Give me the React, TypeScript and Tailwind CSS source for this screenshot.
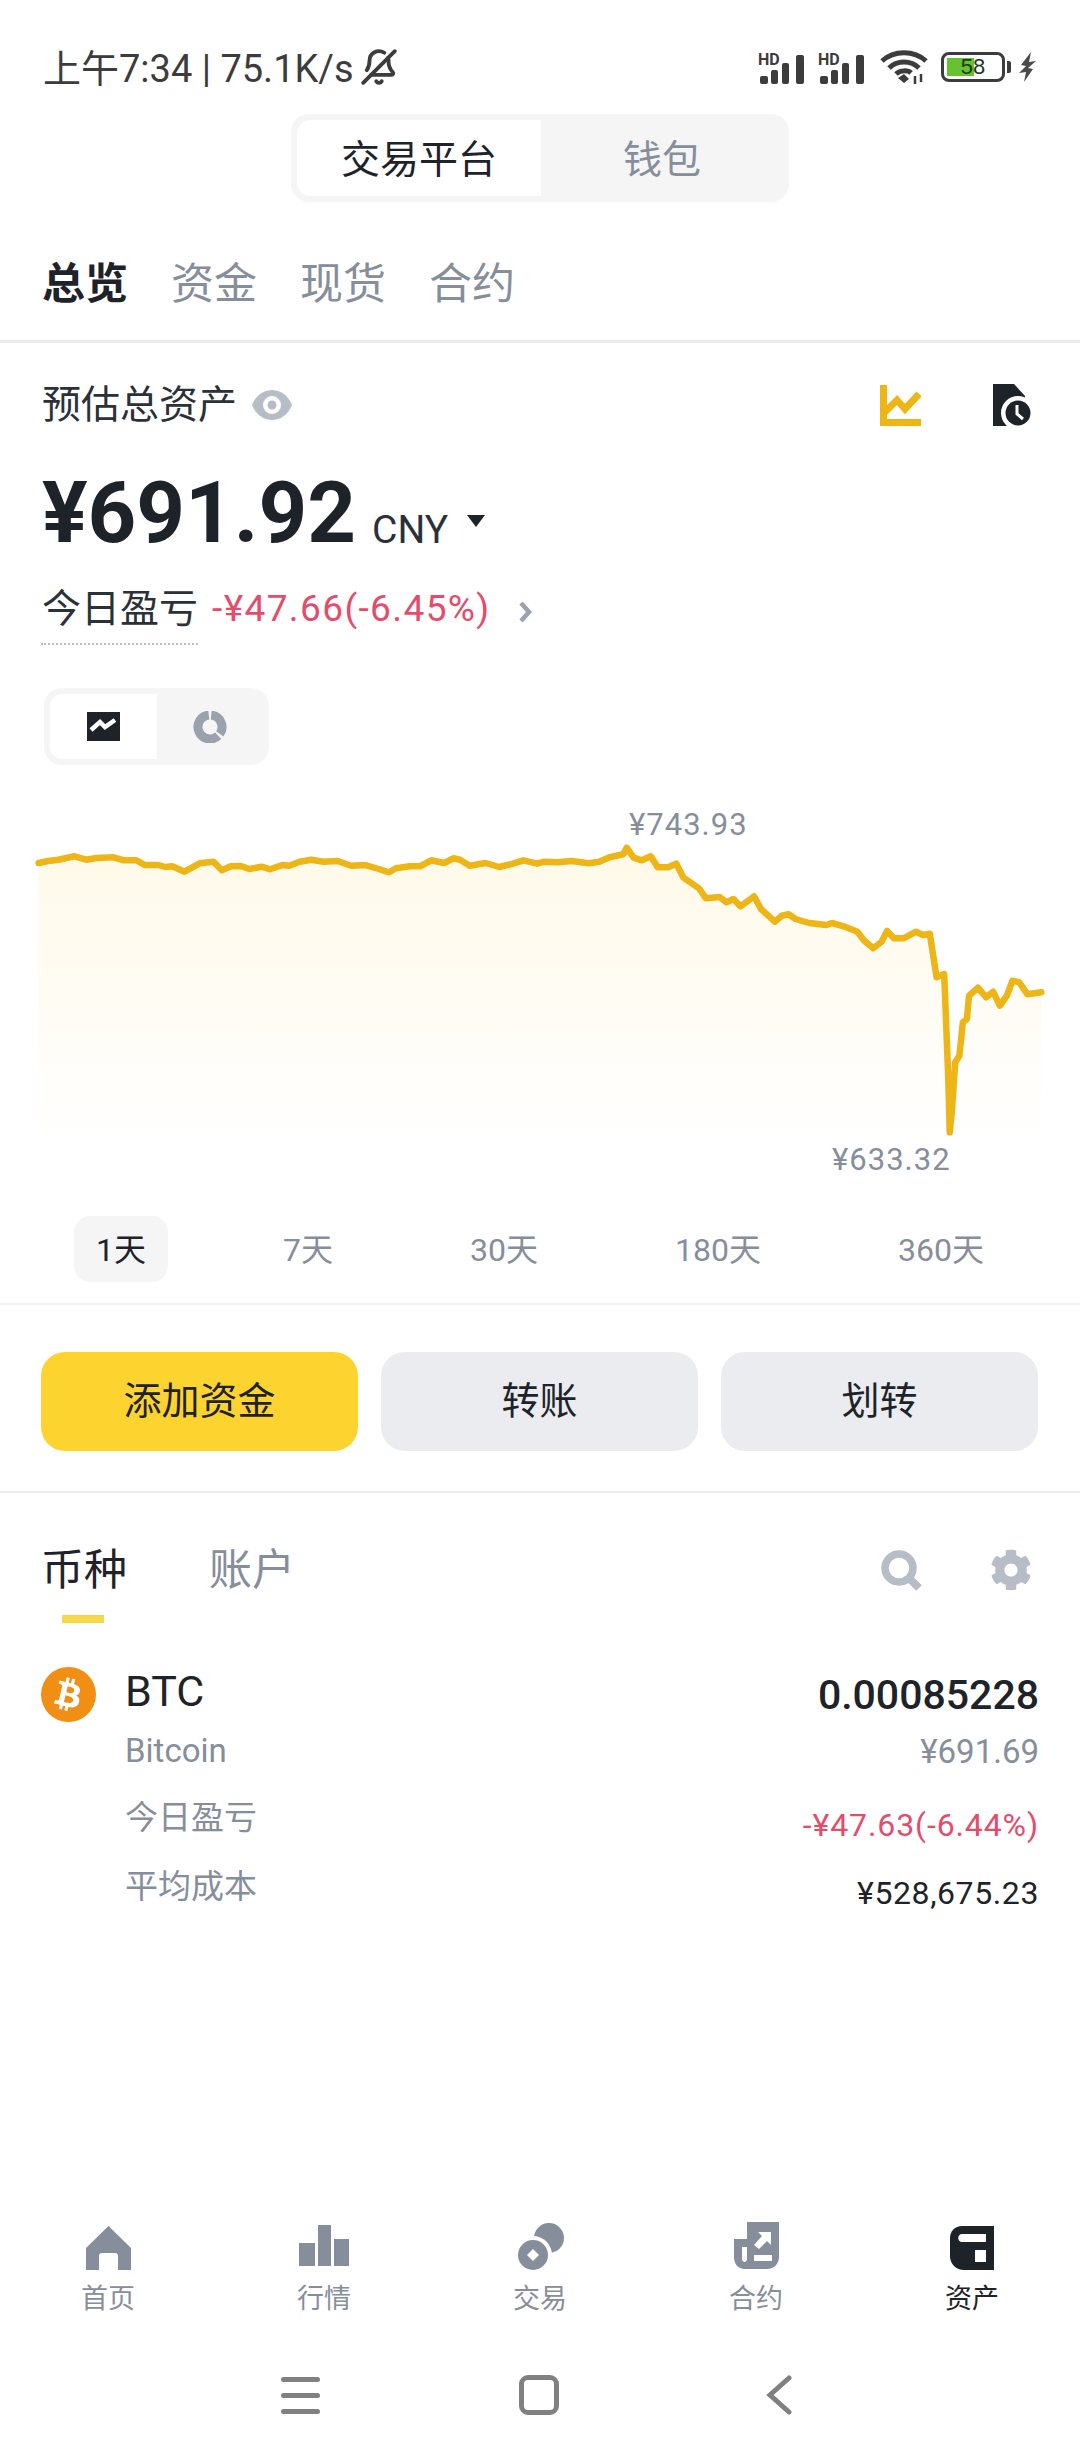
import { BellOff } from "lucide-react";
import { FaBtc, FaCog } from "react-icons/fa";

// traced from the reference, x / 1.452 and y / 3 gives page pixels inside the chart box
const linePoints = [
  [56, 192], [70, 186], [85, 182], [108, 172], [125, 182], [140, 177], [165, 175], [180, 184], [198, 184], [210, 198],
  [230, 198], [240, 204], [250, 202], [268, 218], [290, 193], [310, 188], [322, 214], [335, 202], [350, 201], [362, 210],
  [380, 203], [392, 211], [410, 198], [420, 200], [435, 188], [452, 182], [470, 188], [490, 186], [510, 200], [530, 198],
  [550, 210], [565, 220], [575, 208], [595, 202], [610, 202], [626, 184], [645, 192], [658, 178], [668, 182], [682, 200],
  [705, 192], [725, 204], [745, 194], [760, 184], [780, 194], [790, 188], [810, 190], [830, 186], [855, 193], [870, 188],
  [885, 175], [905, 166], [910, 146], [920, 176], [932, 184], [945, 172], [955, 205], [970, 205], [982, 194], [992, 235],
  [1015, 268], [1025, 298], [1045, 294], [1055, 310], [1065, 300], [1075, 322], [1095, 292], [1105, 330], [1125, 368],
  [1135, 350], [1145, 346], [1155, 360], [1175, 372], [1200, 378], [1208, 372], [1225, 382], [1245, 398], [1255, 425],
  [1268, 448], [1280, 428], [1288, 396], [1298, 418], [1312, 418], [1330, 398], [1340, 408], [1350, 404], [1360, 535],
  [1371, 525], [1377, 840], [1379, 1000], [1382, 940], [1387, 790], [1393, 770], [1398, 670], [1404, 660], [1407, 590], [1420, 566],
  [1432, 595], [1442, 578], [1452, 620], [1462, 590], [1470, 545], [1480, 550], [1492, 586], [1512, 580],
];
const line = linePoints.map(([x, y]) => `${(x / 1.452).toFixed(1)},${(y / 3).toFixed(1)}`).join(" ");
const area = `38,347 ${line} 1041,347`;

function Signal() {
  return (
    <svg width="50" height="36" viewBox="0 -4 50 36" fill="#3c3c3c">
      <text x="0" y="12" fontSize="16" fontWeight="700" fontFamily="Roboto">HD</text>
      <rect x="2" y="23" width="8" height="8" rx="2" />
      <rect x="13" y="17" width="7" height="14" rx="2" />
      <rect x="24" y="10" width="7" height="21" rx="2" />
      <rect x="38" y="2" width="8" height="29" rx="2" />
    </svg>
  );
}

function StatusRight() {
  return (
    <div className="flex items-center">
      <Signal />
      <div className="ml-[10px]"><Signal /></div>
      <svg width="48" height="34" viewBox="0 0 48 34" className="ml-[12px]" fill="none" stroke="#3c3c3c" strokeWidth="5">
        <path d="M2 11C14 0 34 0 46 11" />
        <path d="M9 18C17 10 31 10 39 18" />
        <path d="M16 24C20 20 28 20 31 23" />
        <path d="M18 28l6-4 5 5-5 4z" fill="#3c3c3c" stroke="none" />
        <path d="M35 26v8M41 24v8" strokeWidth="2.5" />
      </svg>
      <div className="ml-[13px] relative w-[64px] h-[30px] rounded-[8px] border-[3px] border-[#3c3c3c] p-[3px]">
        <div className="w-[27px] h-full bg-[#66c22e]" />
        <span className="absolute inset-0 flex items-center justify-center text-[22px] leading-none text-[#23361a] font-[Liberation_Sans,sans-serif]">58</span>
      </div>
      <div className="ml-[2px] w-[4px] h-[12px] rounded-r-[2px] bg-[#3c3c3c]" />
      <svg width="18" height="30" viewBox="0 0 18 30" className="ml-[8px]" fill="#4a4a4a">
        <path d="M12 0 2 13l5 1-7 7 7-1-2 10 9-13-5-1 8-7-7 1z" />
      </svg>
    </div>
  );
}

function TrendIcon() {
  return (
    <svg width="41" height="41" viewBox="0 0 41 41" fill="none" stroke="#edb516" strokeWidth="7">
      <path d="M3.5 0V37.5H41" />
      <path d="M5 27 17 15 25 24 39 9" />
    </svg>
  );
}

function HistoryIcon() {
  return (
    <svg width="38" height="42" viewBox="0 0 38 42">
      <path d="M0 0H21L32 12V42H0Z" fill="#1e2329" />
      <circle cx="25" cy="29" r="17" fill="#fff" />
      <circle cx="25" cy="29" r="12.5" fill="#1e2329" />
      <path d="M24 21V30L30 35" fill="none" stroke="#fff" strokeWidth="3" />
    </svg>
  );
}

function NavHome() {
  return (
    <svg width="45" height="44" viewBox="0 0 45 44">
      <path fill="#868e9c" d="M22.5 0 45 22V44H32V30Q32 27 29 27H16Q13 27 13 30V44H0V22Z" />
    </svg>
  );
}

function NavMarket() {
  return (
    <svg width="50" height="41" viewBox="0 0 50 41" fill="#868e9c" className="mb-[4px]">
      <rect x="0" y="18" width="16" height="23" />
      <rect x="19" y="0" width="13" height="41" />
      <rect x="35" y="14" width="15" height="27" />
    </svg>
  );
}

function NavTrade() {
  return (
    <svg width="47" height="48" viewBox="0 0 47 48">
      <circle cx="32" cy="16" r="15" fill="#868e9c" />
      <circle cx="16" cy="33" r="19" fill="#fff" />
      <circle cx="16" cy="33" r="15" fill="#868e9c" />
      <path d="M16 27 22 33 16 39 10 33Z" fill="#fff" />
    </svg>
  );
}

function NavFutures() {
  return (
    <svg width="45" height="47" viewBox="0 0 45 47" className="mb-[1px]">
      <path fill="#868e9c" d="M13 0H45V35C45 42 40 47 33 47H11C4 47 0 42 0 35V17H13Z" />
      <path fill="#fff" d="M20 33H38V39H20ZM8 25H13V38Q10.5 42 8 38ZM24 10H37V23L33 19 25 27 20 23 28 14Z" />
    </svg>
  );
}

function NavAssets() {
  return (
    <svg width="44" height="44" viewBox="0 0 44 44">
      <path fill="#1e2329" d="M12 0H44V44H14C6 44 0 38 0 30V12C0 5 5 0 12 0Z" />
      <path fill="#fff" d="M12 8H36V16H12C7 16 7 8 12 8ZM25 24H36V36H25Z" />
    </svg>
  );
}

const navItems = [
  { label: "首页", icon: <NavHome /> },
  { label: "行情", icon: <NavMarket /> },
  { label: "交易", icon: <NavTrade /> },
  { label: "合约", icon: <NavFutures /> },
  { label: "资产", icon: <NavAssets />, active: true },
];

const ranges = ["1天", "7天", "30天", "180天", "360天"];

export default function App() {
  return (
    <div className="relative w-[1080px] h-[2460px] bg-white overflow-hidden text-[#1e2329] font-[Roboto,'Noto_Sans_CJK_SC',sans-serif]">
      {/* status bar */}
      <div className="flex items-center justify-between pt-[47px] pl-[43px] pr-[43px] h-[87px]">
        <div className="flex items-center text-[38px] leading-[40px] text-[#3c3c3c]">
          <span className="mt-[3px]">上午7:34 | 75.1K/s</span>
          <BellOff size={38} strokeWidth={2.4} className="ml-[6px] -scale-x-100" />
        </div>
        <StatusRight />
      </div>

      {/* exchange / wallet */}
      <div className="mt-[27px] ml-[291px] w-[498px] h-[88px] rounded-[18px] bg-[#f5f5f5] p-[6px] flex">
        <div className="w-[244px] bg-white rounded-l-[14px] flex items-center justify-center pt-[4px] text-[39px]">交易平台</div>
        <div className="flex-1 flex items-center justify-center pt-[4px] text-[39px] text-[#868e9c]">钱包</div>
      </div>

      {/* section tabs */}
      <div className="pt-[52px] pb-[26px] pl-[42px] h-[141px] border-b-[3px] border-[#eaecef] flex gap-[43px] text-[43px] leading-[60px] text-[#868e9c]">
        <span className="font-bold text-[#1e2329]">总览</span>
        <span>资金</span>
        <span>现货</span>
        <span>合约</span>
      </div>

      {/* estimated balance */}
      <div className="mt-[41px] h-[42px] pl-[42px] pr-[49px] flex items-center justify-between">
        <div className="flex items-center text-[39px] leading-[42px] text-[#2b3139]">
          <span>预估总资产</span>
          <svg width="40" height="30" viewBox="0 0 40 30" className="ml-[15px]">
            <path d="M0 15C8 -5 32 -5 40 15 32 35 8 35 0 15Z" fill="#b7bdc6" />
            <circle cx="20" cy="15" r="9" fill="#fff" />
            <circle cx="20" cy="15" r="4.5" fill="#b7bdc6" />
          </svg>
        </div>
        <div className="flex items-center gap-[72px]">
          <TrendIcon />
          <HistoryIcon />
        </div>
      </div>

      <div className="mt-[45px] h-[84px] pl-[42px] flex items-center">
        <span className="text-[85px] leading-[84px] font-bold">¥691.92</span>
        <span className="ml-[16px] mt-[34px] text-[39px] leading-[40px] text-[#2b3139]">CNY</span>
        <svg width="18" height="12" viewBox="0 0 18 12" className="ml-[19px] mt-[16px]">
          <path d="M0 0H18L9 12Z" fill="#1e2329" />
        </svg>
      </div>

      <div className="mt-[32px] h-[44px] pl-[42px] flex items-center">
        <span className="text-[39px] leading-[44px] text-[#2b3139]">今日盈亏</span>
        <span className="ml-[14px] text-[37px] tracking-[1.4px] leading-[44px] text-[#e54b6b]">-¥47.66(-6.45%)</span>
        <svg width="15" height="20" viewBox="0 0 15 20" className="ml-[27px] mt-[5px]" fill="none" stroke="#9aa2ad" strokeWidth="4.5">
          <path d="M3 1 11 10 3 19" />
        </svg>
      </div>
      <div className="mt-[12px] ml-[41px] w-[157px] border-t-2 border-dotted border-[#b7bdc6]" />

      {/* chart type */}
      <div className="mt-[43px] ml-[44px] w-[225px] h-[77px] rounded-[18px] bg-[#f5f5f5] p-[6px] flex">
        <div className="w-[107px] bg-white rounded-l-[12px] flex items-center justify-center">
          <svg width="33" height="29" viewBox="0 0 33 29">
            <rect width="33" height="29" fill="#1e2329" />
            <path d="M4 18 13 10 18 15 28 8" fill="none" stroke="#fff" strokeWidth="4.5" />
          </svg>
        </div>
        <div className="flex-1 flex items-center justify-center">
          <svg width="34" height="32" viewBox="0 0 34 32" fill="none" stroke="#9aa2ad" strokeWidth="9">
            <path d="M18.25 4.07A12 12 0 0 1 26.83 22.88" />
            <path d="M25.18 24.78A12 12 0 1 1 15.75 4.07" />
          </svg>
        </div>
      </div>

      {/* balance chart */}
      <div className="relative mt-[34px] h-[400px]">
        <svg width="1080" height="400" viewBox="0 0 1080 400" className="block">
          <defs>
            <linearGradient id="fade" x1="0" y1="0" x2="0" y2="1">
              <stop offset="0%" stopColor="#fff9e8" />
              <stop offset="100%" stopColor="#ffffff" />
            </linearGradient>
          </defs>
          <polygon points={area} fill="url(#fade)" />
          <polyline points={line} fill="none" stroke="#edb516" strokeWidth="6.5" strokeLinejoin="round" strokeLinecap="round" />
        </svg>
        <span className="absolute left-[629px] top-[6px] text-[31px] tracking-[1px] leading-[40px] text-[#868e9c]">¥743.93</span>
        <span className="absolute left-[832px] top-[341px] text-[31px] tracking-[1px] leading-[40px] text-[#868e9c]">¥633.32</span>
      </div>

      {/* time range */}
      <div className="mt-[17px] flex justify-between pl-[74px] pr-[74px] text-[32px] text-[#868e9c]">
        {ranges.map((r, i) => (
          <div key={r} className={i === 0 ? "h-[66px] px-[22px] pt-[2px] rounded-[16px] bg-[#f5f5f5] text-[#1e2329] flex items-center" : "h-[66px] px-[22px] pt-[2px] flex items-center"}>
            {r}
          </div>
        ))}
      </div>
      <div className="mt-[21px] h-[2px] bg-[#f1f2f4]" />

      {/* actions */}
      <div className="mt-[47px] h-[99px] pl-[41px] pr-[42px] flex gap-[23px] text-[38px]">
        <button className="flex-1 rounded-[24px] bg-[#fdd330]">添加资金</button>
        <button className="flex-1 rounded-[24px] bg-[#eaecef]">转账</button>
        <button className="flex-1 rounded-[24px] bg-[#eaecef]">划转</button>
      </div>
      <div className="mt-[40px] h-[2px] bg-[#eaecef]" />

      {/* coin list header */}
      <div className="mt-[52px] h-[50px] pl-[41px] pr-[48px] flex items-center justify-between">
        <div className="flex gap-[82px] text-[43px] leading-[50px] text-[#868e9c]">
          <span className="text-[#1e2329]">币种</span>
          <span>账户</span>
        </div>
        <div className="flex items-center gap-[68px]">
          <svg width="41" height="41" viewBox="0 0 41 41" fill="none" stroke="#b7bdc6">
            <circle cx="18" cy="18" r="14" strokeWidth="7.5" />
            <path d="M28 28 38 38" strokeWidth="8" />
          </svg>
          <FaCog size={42} color="#b7bdc6" />
        </div>
      </div>
      <div className="mt-[20px] ml-[62px] w-[42px] h-[8px] bg-[#f6d848]" />

      {/* BTC row */}
      <div className="mt-[44px] pl-[41px] pr-[41px] flex">
        <div className="w-[55px] h-[55px] rounded-full bg-[#f08f14] flex items-center justify-center">
          <FaBtc size={33} color="#fff" className="rotate-[14deg]" />
        </div>
        <div className="ml-[29px] flex flex-col">
          <span className="text-[43px] leading-[48px] text-[#1e2329]">BTC</span>
          <span className="mt-[16px] text-[33px] leading-[40px] text-[#868e9c]">Bitcoin</span>
          <span className="mt-[27px] text-[33px] leading-[40px] text-[#868e9c]">今日盈亏</span>
          <span className="mt-[29px] text-[33px] leading-[40px] text-[#868e9c]">平均成本</span>
        </div>
        <div className="ml-auto flex flex-col items-end">
          <span className="mt-[4px] text-[41px] leading-[48px] font-medium">0.00085228</span>
          <span className="mt-[13px] text-[33px] leading-[40px] text-[#868e9c]">¥691.69</span>
          <span className="mt-[33px] text-[32px] tracking-[0.9px] leading-[40px] text-[#e54b6b]">-¥47.63(-6.44%)</span>
          <span className="mt-[28px] text-[32px] tracking-[0.6px] leading-[40px]">¥528,675.23</span>
        </div>
      </div>

      {/* bottom tabs */}
      <div className="absolute top-[2222px] left-0 w-[1080px] grid grid-cols-5">
        {navItems.map((item) => (
          <div key={item.label} className="flex flex-col items-center">
            <div className="h-[48px] flex items-end">{item.icon}</div>
            <span className={item.active ? "mt-[11px] text-[27px] leading-[36px] text-[#1e2329]" : "mt-[11px] text-[27px] leading-[36px] text-[#868e9c]"}>{item.label}</span>
          </div>
        ))}
      </div>

      {/* android nav */}
      <div className="absolute top-[2375px] left-0 w-[1080px] h-[40px]">
        <div className="absolute left-[281px] top-[2px] w-[39px] flex flex-col gap-[11px]">
          <div className="h-[5px] rounded-full bg-[#808080]" />
          <div className="h-[5px] rounded-full bg-[#808080]" />
          <div className="h-[5px] rounded-full bg-[#808080]" />
        </div>
        <div className="absolute left-[519px] top-0 w-[40px] h-[40px] rounded-[9px] border-[5px] border-[#808080]" />
        <svg width="26" height="40" viewBox="0 0 26 40" className="absolute left-[766px] top-0" fill="none" stroke="#808080" strokeWidth="5" strokeLinecap="round">
          <path d="M23 3 4 20 23 37" />
        </svg>
      </div>
    </div>
  );
}
